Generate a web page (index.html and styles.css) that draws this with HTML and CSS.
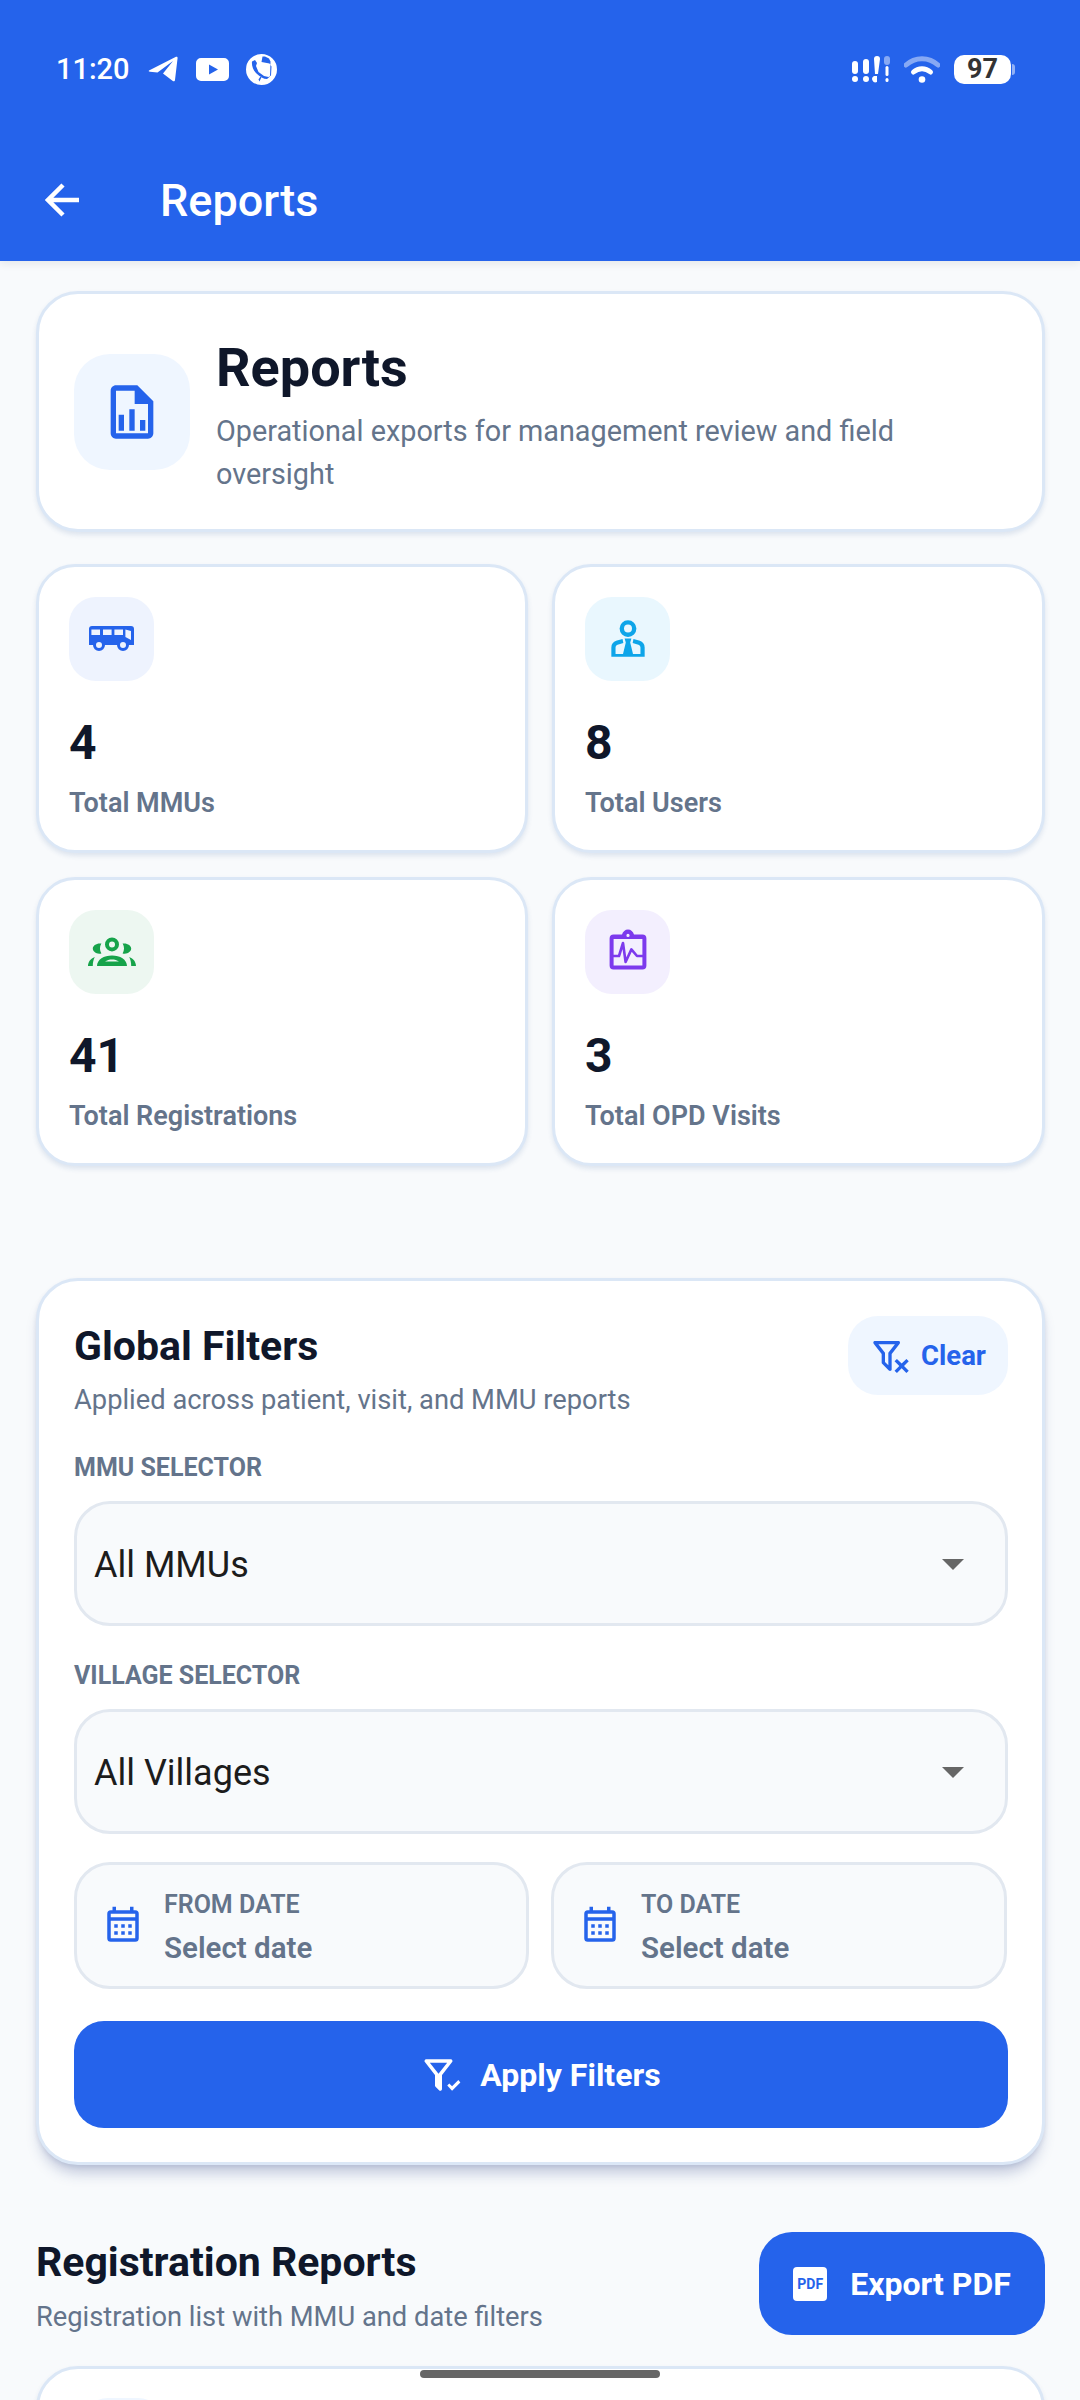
FILE: index.html
```html
<!DOCTYPE html>
<html lang="en">
<head>
<meta charset="utf-8">
<title>Reports</title>
<link rel="stylesheet" href="styles.css">
</head>
<body>
<header class="appbar">
  <div class="status">
    <div class="status-left">
      <span class="time">11:20</span>
      <svg class="ic-tg" viewBox="0 0 30 26"><path d="M1 14.500 28 .8c1-.5 1.800.2 1.600 1.300L27 24c-.1 1.200-1.300 1.600-2.200.9L15 17.500 25 5 9.500 16.600 2 15.800c-1.200-.1-1.700-.8-1-1.300z"/></svg>
      <svg class="ic-yt" viewBox="0 0 33 23"><path fill-rule="evenodd" d="M5 0h23a5 5 0 0 1 5 5v13a5 5 0 0 1-5 5H5a5 5 0 0 1-5-5V5a5 5 0 0 1 5-5zm8 6.500v10l9-5z"/></svg>
      <svg class="ic-call" viewBox="0 0 31 31"><path fill-rule="evenodd" d="M15.500 0a15.500 15.500 0 1 1 0 31 15.500 15.500 0 0 1 0-31zM16.500 2.500l-1 5.500 8 1.500 2 3-.5 9-2.500 1.500-4.500-1-5.500-4-2.500-6 1-3-2-3-3 1.500c-.5 4 1 8.500 4.500 12s7 5.500 10.500 5.500l3-2.500.5-15-1.500-3-4-2zM12.500 25.500l2-3 1 .5-2 4.500z"/></svg>
    </div>
    <div class="status-right">
      <svg class="ic-sig" viewBox="0 0 38 28">
        <rect x="0" y="6" width="6" height="13" rx="3"/><rect x="0" y="21" width="6" height="6" rx="3"/>
        <rect x="11" y="4" width="6" height="15" rx="3"/><rect x="11" y="21" width="6" height="6" rx="3"/>
        <path d="M22 4a3 3 0 0 1 6 0l-2 15h-3zM22 21h3v6a3 3 0 0 1-3-6z"/>
        <rect class="dim" x="32" y="1" width="6" height="9" rx="3"/><rect x="33.500" y="11" width="3" height="10" rx="1.500"/><rect x="33.500" y="23" width="3" height="4" rx="1.500"/>
      </svg>
      <svg class="ic-wifi" viewBox="0 0 36 28">
        <path class="dim wave" d="M2 10C11 1.500 25 1.500 34 10"/>
        <path class="wave" d="M9.500 17c5-4.500 12-4.500 17 0"/>
        <circle cx="18" cy="24.500" r="3.300"/>
      </svg>
      <span class="battery">97</span>
      <span class="battery-tip"></span>
    </div>
  </div>
  <div class="toolbar">
    <svg class="back" viewBox="0 0 36 36"><path d="M34 18H3M18 3 3 18l15 15"/></svg>
    <span class="bar-title">Reports</span>
  </div>
</header>

<main class="content">
  <section class="card hero">
    <div class="hero-icon">
      <svg class="svg64 blue" viewBox="0 0 24 24"><path d="M14 2H6C4.900 2 4 2.900 4 4V20C4 21.100 4.900 22 6 22H18C19.100 22 20 21.100 20 20V8L14 2M18 20H6V4H13V9H18V20M9 13V19H7V13H9M15 15V19H17V15H15M11 11V19H13V11H11Z"/></svg>
    </div>
    <div class="hero-text">
      <h1 class="hero-title">Reports</h1>
      <p class="hero-sub">Operational exports for management review and field oversight</p>
    </div>
  </section>

  <section class="stats">
    <div class="card stat">
      <div class="stat-icon bg-blue">
        <svg class="svg48 blue" viewBox="0 0 24 24"><path fill-rule="evenodd" d="M2 5.500h19.500A1.500 1.500 0 0 1 23 7v8h-2.500a3 3 0 0 1-6 0h-6a3 3 0 0 1-6 0H.5V7A1.500 1.500 0 0 1 2 5.500zM1.700 7.300V10H6V7.300zM7.500 7.300V10h4.300V7.300zM13.200 7.300V10h4.300V7.300zM18.700 7.300V11l2.800 1.500V8zM5.500 13.500a1.500 1.500 0 1 0 0 3 1.500 1.500 0 0 0 0-3zM17.500 13.500a1.500 1.500 0 1 0 0 3 1.500 1.500 0 0 0 0-3z"/></svg>
      </div>
      <div class="stat-num">4</div>
      <div class="stat-label">Total MMUs</div>
    </div>
    <div class="card stat">
      <div class="stat-icon bg-cyan">
        <svg class="svg48 cyan" viewBox="0 0 24 24"><path d="M12 2.600a4.200 4.200 0 1 1 0 8.400 4.200 4.200 0 1 1 0-8.400zM12 4.800a2 2 0 1 0 0 4 2 2 0 1 0 0-4zM3.670 19.500V16.200c0-1.600 1-2.800 2.400-3.300l3.200-.9.400 2-2.900.9c-.6.200-1 .8-1 1.400v3.200zM20.330 19.500V16.200c0-1.600-1-2.800-2.400-3.300l-3.200-.9-.4 2 2.900.9c.6.200 1 .8 1 1.400v3.200zM10.300 11.700h3.400l-.6 2 1.400 5.800H9.500l1.400-5.800zM3.670 19.500h16.660v1.330H3.670z"/></svg>
      </div>
      <div class="stat-num">8</div>
      <div class="stat-label">Total Users</div>
    </div>
    <div class="card stat">
      <div class="stat-icon bg-green">
        <svg class="svg48 green" viewBox="0 0 24 24"><path fill-rule="evenodd" d="M12 4.700a3.500 3.500 0 1 1 0 7 3.500 3.500 0 0 1 0-7zm0 2a1.500 1.500 0 1 0 0 3 1.500 1.500 0 0 0 0-3zM4.500 19c0-3.300 3.500-5.300 7.500-5.300s7.500 2 7.500 5.300zM8.500 16.800c1-.8 2.200-1.100 3.500-1.100s2.500.3 3.500 1.100zM6.700 7.800c-2.200-.4-4.300.9-4.300 2.500 0 1.700 2 2.900 4.300 2.400-.9-1.400-1-3.400 0-4.900zM17.300 7.800c2.200-.4 4.300.9 4.300 2.500 0 1.700-2 2.900-4.300 2.400.9-1.400 1-3.400 0-4.900zM0 19c0-2 1.300-3.700 3.400-4.500-.7 1.200-1 2.900-1 4.500zM24 19c0-2-1.300-3.700-3.400-4.500.7 1.200 1 2.900 1 4.500z"/></svg>
      </div>
      <div class="stat-num">41</div>
      <div class="stat-label">Total Registrations</div>
    </div>
    <div class="card stat">
      <div class="stat-icon bg-purple">
        <svg class="svg48 purple" viewBox="0 0 24 24"><path fill-rule="evenodd" d="M9 3.200C9.400 1.700 10.600.7 12 .7s2.600 1 3 2.500h4.200a2 2 0 0 1 2 2v13.500a2 2 0 0 1-2 2H4.800a2 2 0 0 1-2-2V5.200a2 2 0 0 1 2-2zM12 2.900a.8.8 0 1 0 0 1.600.8.8 0 0 0 0-1.600zM4.800 5.500v13.200h14.400V5.500z"/><path class="pulse" d="M4 14h3.500l2-6.500 1.300 9.500 2.900-6.300L16.500 14H20"/></svg>
      </div>
      <div class="stat-num">3</div>
      <div class="stat-label">Total OPD Visits</div>
    </div>
  </section>

  <section class="card filters">
    <div class="filters-head">
      <div>
        <h2 class="section-title filters-title">Global Filters</h2>
        <p class="section-sub filters-sub">Applied across patient, visit, and MMU reports</p>
      </div>
      <button class="clear-btn">
        <svg class="svg40 blue" viewBox="0 0 24 24"><path d="M14.730 20.830L17.580 18L14.730 15.170L16.150 13.760L19 16.570L21.840 13.760L23.250 15.170L20.410 18L23.250 20.830L21.840 22.240L19 19.400L16.150 22.240L14.730 20.830M13 19.880C13.040 20.180 12.940 20.500 12.710 20.710C12.320 21.100 11.690 21.100 11.300 20.710L7.290 16.700C7.060 16.470 6.960 16.160 7 15.870V10.750L2.210 4.620C1.870 4.190 1.950 3.560 2.380 3.220C2.570 3.080 2.780 3 3 3V3H17V3C17.220 3 17.430 3.080 17.620 3.220C18.050 3.560 18.130 4.190 17.790 4.620L13 10.750V19.880M5.040 5L9 10.060V15.580L11 17.580V10.050L14.960 5H5.040Z"/></svg>
        <span>Clear</span>
      </button>
    </div>
    <label class="field-label first">MMU SELECTOR</label>
    <div class="select"><span>All MMUs</span><span class="caret"></span></div>
    <label class="field-label second">VILLAGE SELECTOR</label>
    <div class="select"><span>All Villages</span><span class="caret"></span></div>
    <div class="dates">
      <div class="date">
        <svg class="svg42 blue" viewBox="0 0 24 24"><path fill-rule="evenodd" d="M6 1h2v2h8V1h2v2h1a2 2 0 0 1 2 2v14a2 2 0 0 1-2 2H5a2 2 0 0 1-2-2V5a2 2 0 0 1 2-2h1zM5 5v2h14V5zM5 9v10h14V9zM7 11h2v2H7zM11 11h2v2h-2zM15 11h2v2h-2zM7 15h2v2H7zM11 15h2v2h-2zM15 15h2v2h-2z"/></svg>
        <div class="date-text">
          <div class="date-label">FROM DATE</div>
          <div class="date-value">Select date</div>
        </div>
      </div>
      <div class="date">
        <svg class="svg42 blue" viewBox="0 0 24 24"><path fill-rule="evenodd" d="M6 1h2v2h8V1h2v2h1a2 2 0 0 1 2 2v14a2 2 0 0 1-2 2H5a2 2 0 0 1-2-2V5a2 2 0 0 1 2-2h1zM5 5v2h14V5zM5 9v10h14V9zM7 11h2v2H7zM11 11h2v2h-2zM15 11h2v2h-2zM7 15h2v2H7zM11 15h2v2h-2zM15 15h2v2h-2z"/></svg>
        <div class="date-text">
          <div class="date-label">TO DATE</div>
          <div class="date-value">Select date</div>
        </div>
      </div>
    </div>
    <button class="apply-btn">
      <svg class="svg42 white" viewBox="0 0 24 24"><path d="M12 12V19.880C12.040 20.180 11.940 20.500 11.710 20.710C11.320 21.100 10.690 21.100 10.300 20.710L8.290 18.700C8.060 18.470 7.960 18.160 8 17.870V12H7.970L2.210 4.620C1.870 4.190 1.950 3.560 2.380 3.220C2.570 3.080 2.780 3 3 3H17C17.220 3 17.430 3.080 17.620 3.220C18.050 3.560 18.130 4.190 17.790 4.620L12.030 12H12M5.040 5L10 11.340V17.580L10 17.580V11.340L14.960 5H5.040M17.750 21L15 18L16.160 16.840L17.750 18.430L21.340 14.840L22.500 16.250L17.750 21Z"/></svg>
      <span>Apply Filters</span>
    </button>
  </section>

  <section class="report-head">
    <div class="report-text">
      <h2 class="section-title">Registration Reports</h2>
      <p class="section-sub report-sub">Registration list with MMU and date filters</p>
    </div>
    <button class="export-btn">
      <span class="pdf-badge">PDF</span>
      <span>Export PDF</span>
    </button>
  </section>

  <section class="card report-card">
    <div class="report-icon"></div>
  </section>
</main>
<div class="home-bar"></div>
</body>
</html>
```
FILE: styles.css
```css
* { box-sizing: border-box; }
html, body { margin: 0; padding: 0; }
body {
  width: 1080px;
  height: 2400px;
  overflow: hidden;
  position: relative;
  background: #f8fafc;
  font-family: Roboto, "Liberation Sans", sans-serif;
  color: #0f172a;
}
h1, h2, p { margin: 0; }
button { border: 0; font-family: inherit; padding: 0; }
svg { display: block; flex: none; fill: currentColor; }

.appbar {
  height: 261px;
  background: #2563eb;
  color: #fff;
  box-shadow: 0 3px 8px rgba(15, 23, 42, .08);
}
.status {
  height: 139px;
  padding: 53px 65px 0 56px;
  display: flex;
  justify-content: space-between;
  align-items: flex-start;
}
.status-left, .status-right { display: flex; align-items: center; height: 32px; }
.time { font-size: 29px; font-weight: 500; line-height: 32px; width: 92px; }
.ic-tg { width: 30px; height: 26px; margin-right: 18px; }
.ic-yt { width: 33px; height: 23px; margin-right: 17px; }
.ic-call { width: 31px; height: 31px; }
.ic-sig { width: 38px; height: 28px; margin-right: 14px; }
.ic-wifi { width: 36px; height: 28px; margin-right: 14px; }
.dim { opacity: .45; }
.wave { fill: none; stroke: #fff; stroke-width: 5; stroke-linecap: round; }
.pulse { fill: none; stroke: currentColor; stroke-width: 1.300; stroke-linejoin: round; }
.battery {
  width: 57px;
  height: 29px;
  border-radius: 10px;
  background: #fff;
  color: #333;
  font-size: 27px;
  font-weight: 700;
  line-height: 29px;
  text-align: center;
}
.battery-tip {
  width: 3px;
  height: 11px;
  margin-left: 1px;
  border-radius: 0 3px 3px 0;
  background: rgba(255, 255, 255, .5);
}
.toolbar { height: 122px; padding-left: 45px; display: flex; align-items: center; }
.back { width: 36px; height: 36px; fill: none; stroke: #fff; stroke-width: 4.500; margin-right: 79px; }
.bar-title { font-size: 45px; font-weight: 500; }

.content { padding: 30px 35px 0 36px; }
.card {
  background: #fff;
  border: 3px solid #dbe7f6;
  box-shadow: 0 3px 5px rgba(37, 70, 140, .12);
}
.hero {
  height: 241px;
  border-radius: 42px;
  padding: 0 35px;
  display: flex;
  align-items: center;
  gap: 26px;
}
.hero-icon {
  width: 116px;
  height: 116px;
  border-radius: 36px;
  background: #eff6ff;
  flex: none;
  display: flex;
  align-items: center;
  justify-content: center;
}
.hero-text { max-width: 760px; padding-top: 9px; }
.hero-title { font-size: 54px; font-weight: 700; line-height: 62px; }
.hero-sub { font-size: 28.800px; line-height: 43px; color: #64748b; margin-top: 11px; }

.stats {
  margin-top: 32px;
  display: grid;
  grid-template-columns: 492px 493px;
  gap: 24px;
}
.stat { height: 289px; border-radius: 39px; padding: 30px; }
.stat-icon {
  width: 85px;
  height: 84px;
  border-radius: 27px;
  display: flex;
  align-items: center;
  justify-content: center;
}
.bg-blue { background: #eef3fe; }
.bg-cyan { background: #e9f7fe; }
.bg-green { background: #edf7f1; }
.bg-purple { background: #f3effe; }
.blue { color: #2563eb; }
.cyan { color: #0ea5e9; }
.green { color: #16a34a; }
.purple { color: #7c3aed; }
.white { color: #fff; }
.svg64 { width: 64px; height: 64px; }
.svg48 { width: 48px; height: 48px; }
.svg42 { width: 42px; height: 42px; }
.svg40 { width: 40px; height: 40px; }
.stat-num { margin-top: 34px; font-size: 48px; font-weight: 700; line-height: 56px; }
.stat-label { margin-top: 14px; font-size: 27px; font-weight: 600; line-height: 36px; color: #64748b; }

.filters {
  margin-top: 112px;
  height: 887px;
  border-radius: 42px;
  padding: 35px 34px 35px 35px;
  box-shadow: 0 2px 4px rgba(37, 60, 130, .1), 0 12px 14px -4px rgba(37, 60, 130, .26);
}
.filters-head { display: flex; justify-content: space-between; align-items: flex-start; }
.section-title { font-size: 41px; font-weight: 700; line-height: 50px; }
.section-sub { font-size: 27.300px; line-height: 38px; color: #64748b; }
.filters-title { margin-top: 5px; }
.filters-sub { margin-top: 10px; }
.clear-btn {
  width: 160px;
  height: 79px;
  border-radius: 30px;
  background: #eff6ff;
  color: #2563eb;
  font-size: 27.500px;
  font-weight: 700;
  display: flex;
  align-items: center;
  justify-content: center;
  gap: 11px;
}
.field-label {
  display: block;
  font-size: 25px;
  font-weight: 700;
  line-height: 30px;
  color: #64748b;
}
.first { margin-top: 34px; }
.second { margin-top: 35px; }
.select {
  margin-top: 18px;
  height: 125px;
  border: 3px solid #e2e8f0;
  border-radius: 36px;
  background: #f8fafc;
  padding: 2px 41px 0 17px;
  display: flex;
  align-items: center;
  justify-content: space-between;
  font-size: 36px;
  color: #1c1c1c;
}
.caret {
  width: 0;
  height: 0;
  border-left: 11px solid transparent;
  border-right: 11px solid transparent;
  border-top: 11px solid #666;
}
.dates { margin-top: 28px; display: grid; grid-template-columns: 455px 456px; gap: 22px; }
.date {
  height: 127px;
  border: 3px solid #e2e8f0;
  border-radius: 36px;
  background: #f8fafc;
  padding: 0 0 0 25px;
  display: flex;
  align-items: center;
  gap: 20px;
}
.date-text { padding-top: 6px; }
.date-label { font-size: 25px; font-weight: 600; line-height: 30px; color: #64748b; }
.date-value { font-size: 29.500px; font-weight: 600; line-height: 38px; color: #64748b; margin-top: 9px; }
.apply-btn {
  margin-top: 32px;
  width: 100%;
  height: 107px;
  border-radius: 30px;
  background: #2563eb;
  color: #fff;
  font-size: 32px;
  font-weight: 700;
  display: flex;
  align-items: center;
  justify-content: center;
  gap: 17px;
}

.report-head {
  margin-top: 66px;
  display: flex;
  justify-content: space-between;
  align-items: center;
}
.report-text { padding-top: 6px; }
.report-sub { margin-top: 11px; }
.export-btn {
  width: 286px;
  height: 103px;
  border-radius: 33px;
  background: #2563eb;
  color: #fff;
  font-size: 32px;
  font-weight: 700;
  display: flex;
  align-items: center;
  justify-content: center;
  gap: 23px;
}
.pdf-badge {
  width: 34px;
  height: 34px;
  border-radius: 4px;
  background: #fff;
  color: #2563eb;
  font-size: 14px;
  font-weight: 700;
  line-height: 34px;
  text-align: center;
}
.report-card {
  margin-top: 30px;
  height: 200px;
  border-radius: 42px 42px 0 0;
  padding: 29px 42px;
}
.report-icon { width: 84px; height: 84px; border-radius: 27px; background: #eff6ff; }
.home-bar {
  position: absolute;
  left: 420px;
  top: 2370px;
  width: 240px;
  height: 8px;
  border-radius: 4px;
  background: #666;
}
```
